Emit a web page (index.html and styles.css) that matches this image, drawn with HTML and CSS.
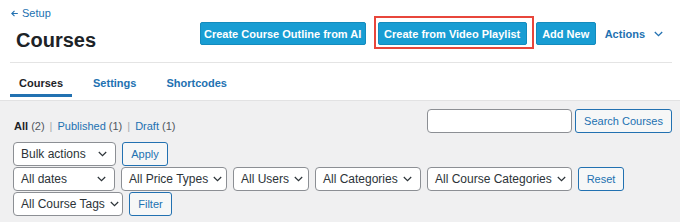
FILE: index.html
```html
<!DOCTYPE html>
<html lang="en">
<head>
<meta charset="utf-8">
<title>Courses</title>
<link rel="stylesheet" href="styles.css">
</head>
<body>
<div class="top">
  <a class="back" href="#"><svg class="back-arrow" width="7" height="7" viewBox="0 0 7 7"><path d="M3.5 0.8 L0.8 3.5 L3.5 6.2 M0.8 3.5 H6.8" fill="none" stroke="#2271b1" stroke-width="1.1"/></svg>Setup</a>
  <div class="head">
    <h1 class="title">Courses</h1>
    <div class="head-actions">
      <a class="btn-primary w-outline" href="#">Create Course Outline from AI</a>
      <a class="btn-primary w-playlist highlight" href="#">Create from Video Playlist</a>
      <a class="btn-primary w-add" href="#">Add New</a>
      <a class="actions-menu" href="#">Actions<svg width="9" height="6" viewBox="0 0 9 6"><path d="M0.8 1 L4.5 4.7 L8.2 1" fill="none" stroke="#2271b1" stroke-width="1.3"/></svg></a>
    </div>
  </div>
  <div class="sep"></div>
  <nav class="tabs">
    <a class="tab active" href="#">Courses</a>
    <a class="tab" href="#">Settings</a>
    <a class="tab" href="#">Shortcodes</a>
  </nav>
</div>
<div class="main">
  <div class="search-row">
    <div class="status"><b>All</b> <span class="count">(2)</span><span class="pipe">|</span><a href="#">Published</a> <span class="count">(1)</span><span class="pipe">|</span><a href="#">Draft</a> <span class="count">(1)</span></div>
    <div class="search">
      <div class="search-input"></div>
      <a class="btn-secondary w-search" href="#">Search Courses</a>
    </div>
  </div>
  <div class="filters">
    <div class="frow">
      <div class="select w-bulk"><span>Bulk actions</span><svg width="9" height="6" viewBox="0 0 9 6"><path d="M0.8 1 L4.5 4.7 L8.2 1" fill="none" stroke="#2c3338" stroke-width="1.2"/></svg></div>
      <a class="btn-secondary w-apply" href="#">Apply</a>
    </div>
    <div class="frow">
      <div class="select w-dates"><span>All dates</span><svg width="9" height="6" viewBox="0 0 9 6"><path d="M0.8 1 L4.5 4.7 L8.2 1" fill="none" stroke="#2c3338" stroke-width="1.2"/></svg></div>
      <div class="select w-price"><span>All Price Types</span><svg width="9" height="6" viewBox="0 0 9 6"><path d="M0.8 1 L4.5 4.7 L8.2 1" fill="none" stroke="#2c3338" stroke-width="1.2"/></svg></div>
      <div class="select w-users"><span>All Users</span><svg width="9" height="6" viewBox="0 0 9 6"><path d="M0.8 1 L4.5 4.7 L8.2 1" fill="none" stroke="#2c3338" stroke-width="1.2"/></svg></div>
      <div class="select w-cats"><span>All Categories</span><svg width="9" height="6" viewBox="0 0 9 6"><path d="M0.8 1 L4.5 4.7 L8.2 1" fill="none" stroke="#2c3338" stroke-width="1.2"/></svg></div>
      <div class="select w-ccats"><span>All Course Categories</span><svg width="9" height="6" viewBox="0 0 9 6"><path d="M0.8 1 L4.5 4.7 L8.2 1" fill="none" stroke="#2c3338" stroke-width="1.2"/></svg></div>
      <a class="btn-secondary w-reset" href="#">Reset</a>
    </div>
    <div class="frow">
      <div class="select w-tags"><span>All Course Tags</span><svg width="9" height="6" viewBox="0 0 9 6"><path d="M0.8 1 L4.5 4.7 L8.2 1" fill="none" stroke="#2c3338" stroke-width="1.2"/></svg></div>
      <a class="btn-secondary w-filter" href="#">Filter</a>
    </div>
  </div>
</div>
</body>
</html>
```
FILE: styles.css
```css
html { background: #f0f0f1; }
body {
  margin: 0;
  font-family: "Liberation Sans", Arial, sans-serif;
  color: #1d2327;
}
a { text-decoration: none; }

.top {
  background: #fff;
  padding: 6px 8px 3px 10px;
}
.back {
  display: flex;
  width: fit-content;
  align-items: center;
  margin-left: 1px;
  font-size: 11px;
  line-height: 14px;
  color: #2271b1;
}
.back-arrow { margin-right: 4px; }

.head {
  display: flex;
  align-items: flex-start;
}
.title {
  margin: 10px 0 0 6px;
  font-size: 20px;
  line-height: 20px;
  font-weight: 700;
  color: #1d2327;
}
.head-actions {
  margin-left: auto;
  margin-top: 2px;
  margin-right: 9px;
  display: flex;
  align-items: center;
}
.btn-primary {
  display: flex;
  align-items: center;
  justify-content: center;
  height: 23px;
  box-sizing: border-box;
  background: #189dd3;
  border: 1px solid #138bbd;
  border-radius: 2px;
  color: #fff;
  font-size: 11px;
  font-weight: 700;
}
.w-outline { width: 166px; margin-right: 12px; }
.w-playlist { width: 149px; margin-right: 9px; }
.w-add { width: 60px; margin-right: 9px; }
.highlight { position: relative; }
.highlight::after {
  content: "";
  position: absolute;
  left: -5px;
  right: -8px;
  top: -7px;
  bottom: -5px;
  border: 2px solid #e8463b;
}
.actions-menu {
  display: flex;
  align-items: center;
  gap: 9px;
  font-size: 11px;
  font-weight: 700;
  color: #2271b1;
  padding-top: 1px;
}

.sep {
  height: 1px;
  background: #e4e4e4;
  margin-top: 12px;
}
.tabs {
  display: flex;
  gap: 12px;
}
.tab {
  padding: 13px 9px 4px;
  border-bottom: 3px solid transparent;
  font-size: 11px;
  line-height: 14px;
  font-weight: 700;
  color: #2271b1;
}
.tab.active {
  color: #1d2327;
  border-bottom-color: #2271b1;
}

.main {
  border-top: 1px solid #e2e2e3;
  padding: 8px 8px 6px 13px;
}
.search-row {
  display: flex;
  justify-content: space-between;
  align-items: flex-end;
}
.status {
  margin-left: 1px;
  font-size: 11px;
  line-height: 14px;
  color: #1d2327;
}
.status a { color: #2271b1; }
.status .count { color: #50575e; }
.status .pipe { color: #a7aaad; margin: 0 5px; }
.search {
  display: flex;
  gap: 3px;
}
.search-input {
  width: 145px;
  height: 24px;
  box-sizing: border-box;
  background: #fff;
  border: 1px solid #8c8f94;
  border-radius: 4px;
}
.btn-secondary {
  display: flex;
  align-items: center;
  justify-content: center;
  height: 24px;
  box-sizing: border-box;
  background: #f6f7f7;
  border: 1px solid #2271b1;
  border-radius: 3px;
  color: #2271b1;
  font-size: 11px;
}
.w-search { width: 97px; }
.w-apply { width: 46px; }
.w-reset { width: 46px; }
.w-filter { width: 43px; }

.filters { margin-top: 9px; }
.frow {
  display: flex;
  gap: 6px;
  margin-bottom: 1px;
}
.select {
  display: flex;
  align-items: center;
  justify-content: space-between;
  height: 24px;
  box-sizing: border-box;
  padding: 0 8px 0 7px;
  background: #fff;
  border: 1px solid #8c8f94;
  border-radius: 4px;
  color: #2c3338;
  font-size: 12px;
  white-space: nowrap;
}
.select svg { flex: none; margin-left: 5px; }
.w-bulk { width: 103px; }
.w-dates { width: 102px; }
.w-price { width: 106px; }
.w-users { width: 76px; }
.w-cats { width: 106px; }
.w-ccats { width: 145px; }
.w-tags { width: 110px; }
```
